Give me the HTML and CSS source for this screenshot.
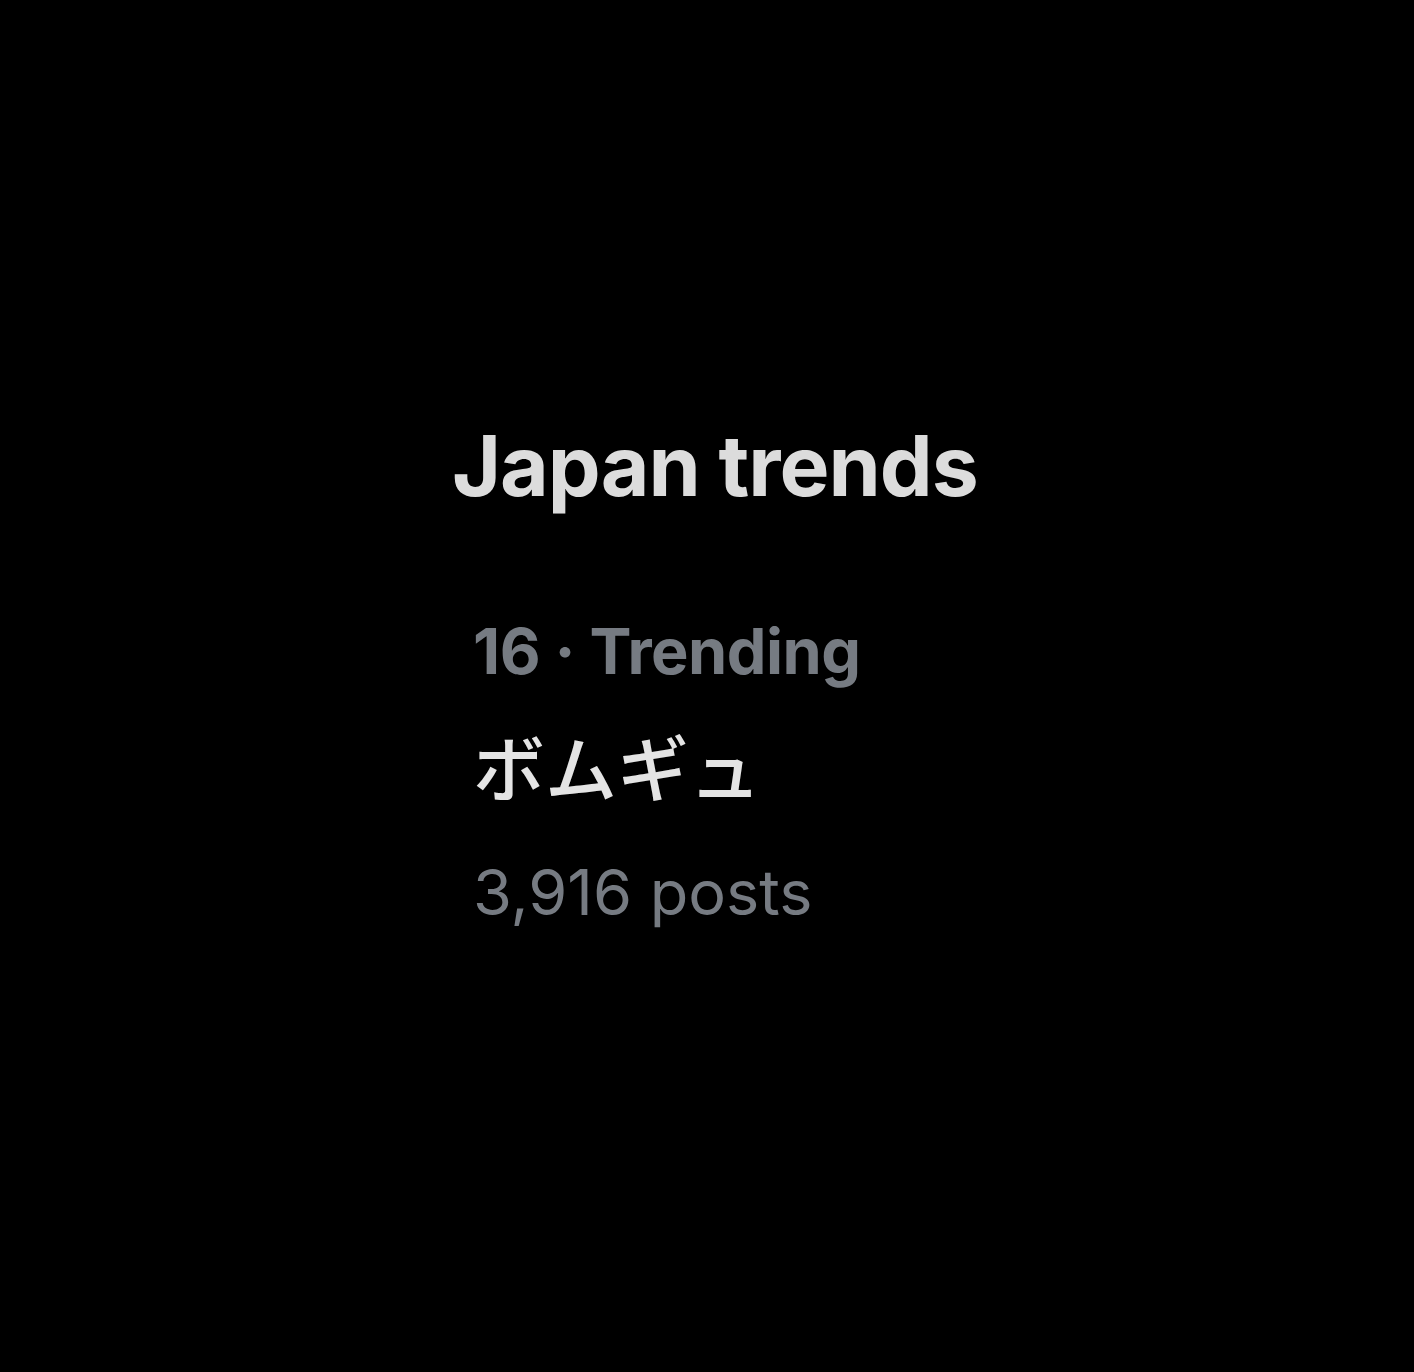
FILE: index.html
```html
<!DOCTYPE html>
<html lang="en">
<head>
<meta charset="utf-8">
<title>Japan trends</title>
<link rel="stylesheet" href="styles.css">
</head>
<body>
<main class="panel">
  <h1 class="title">Japan trends</h1>
  <div class="trend">
    <div class="meta">16 · Trending</div>
    <div class="name">ボムギュ</div>
    <div class="count">3,916 posts</div>
  </div>
</main>
</body>
</html>
```
FILE: styles.css
```css
html, body {
  margin: 0;
  padding: 0;
  background: #000;
  height: 100%;
}
body {
  font-family: Inter, "Noto Sans", "Noto Sans CJK JP", sans-serif;
}
.panel {
  padding: 416px 0 0 452px;
  display: flex;
  flex-direction: column;
}
.title {
  margin: 0;
  font-size: 84px;
  line-height: 100px;
  font-weight: 700;
  color: #dcdcdc;
  letter-spacing: -1px;
}
.trend {
  margin-top: 97px;
  padding-left: 21px;
  display: flex;
  flex-direction: column;
}
.meta {
  font-size: 63px;
  line-height: 76px;
  font-weight: 700;
  color: #767b82;
  letter-spacing: -0.5px;
}
.name {
  margin-top: 31px;
  font-family: "Noto Sans CJK JP", sans-serif;
  font-size: 72px;
  line-height: 90px;
  font-weight: 500;
  color: #e4e4e4;
}
.count {
  margin-top: 44px;
  font-size: 63px;
  line-height: 76px;
  font-weight: 400;
  color: #767b82;
}
```
